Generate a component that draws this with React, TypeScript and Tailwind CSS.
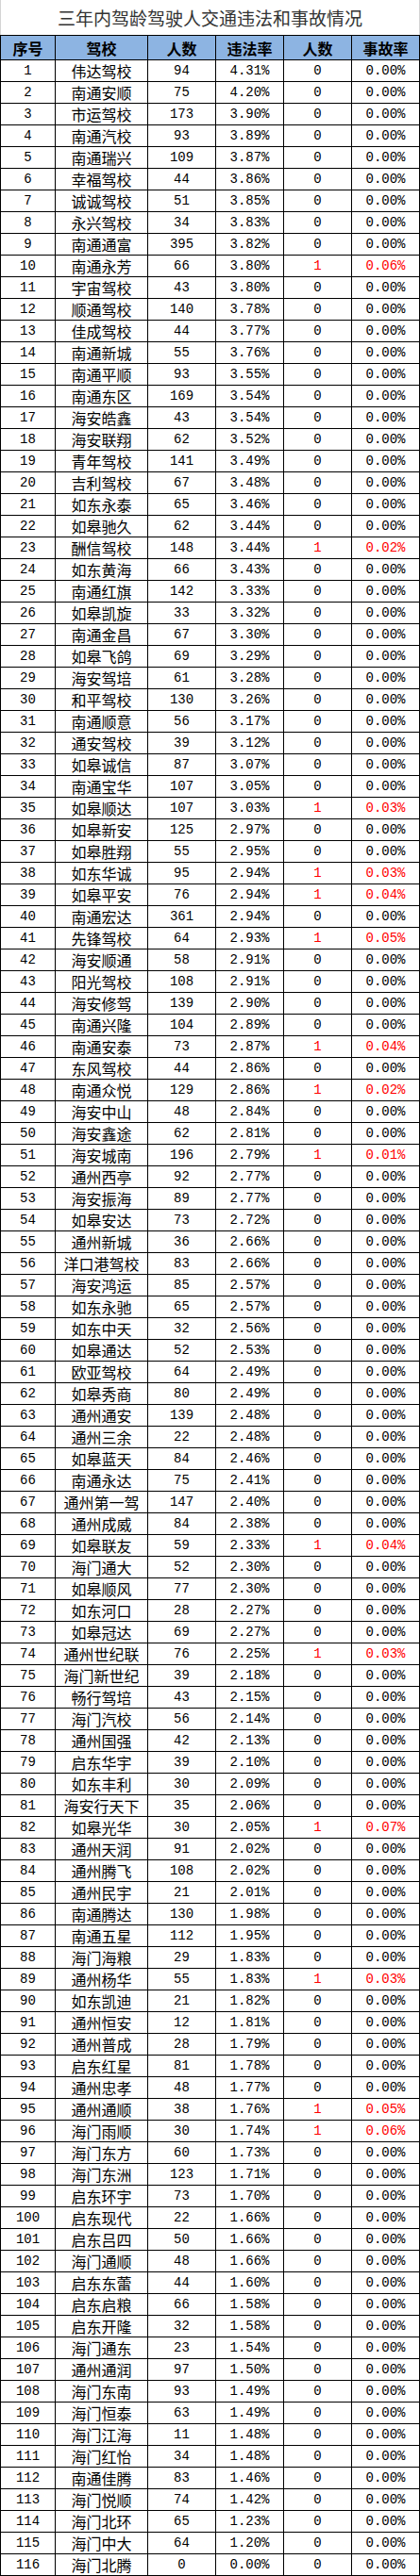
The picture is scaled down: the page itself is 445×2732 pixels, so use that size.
const raw = `伟达驾校,94,4.31%
南通安顺,75,4.20%
市运驾校,173,3.90%
南通汽校,93,3.89%
南通瑞兴,109,3.87%
幸福驾校,44,3.86%
诚诚驾校,51,3.85%
永兴驾校,34,3.83%
南通通富,395,3.82%
南通永芳,66,3.80%,1,0.06%
宇宙驾校,43,3.80%
顺通驾校,140,3.78%
佳成驾校,44,3.77%
南通新城,55,3.76%
南通平顺,93,3.55%
南通东区,169,3.54%
海安皓鑫,43,3.54%
海安联翔,62,3.52%
青年驾校,141,3.49%
吉利驾校,67,3.48%
如东永泰,65,3.46%
如皋驰久,62,3.44%
酬信驾校,148,3.44%,1,0.02%
如东黄海,66,3.43%
南通红旗,142,3.33%
如皋凯旋,33,3.32%
南通金昌,67,3.30%
如皋飞鸽,69,3.29%
海安驾培,61,3.28%
和平驾校,130,3.26%
南通顺意,56,3.17%
通安驾校,39,3.12%
如皋诚信,87,3.07%
南通宝华,107,3.05%
如皋顺达,107,3.03%,1,0.03%
如皋新安,125,2.97%
如皋胜翔,55,2.95%
如东华诚,95,2.94%,1,0.03%
如皋平安,76,2.94%,1,0.04%
南通宏达,361,2.94%
先锋驾校,64,2.93%,1,0.05%
海安顺通,58,2.91%
阳光驾校,108,2.91%
海安修驾,139,2.90%
南通兴隆,104,2.89%
南通安泰,73,2.87%,1,0.04%
东风驾校,44,2.86%
南通众悦,129,2.86%,1,0.02%
海安中山,48,2.84%
海安鑫途,62,2.81%
海安城南,196,2.79%,1,0.01%
通州西亭,92,2.77%
海安振海,89,2.77%
如皋安达,73,2.72%
通州新城,36,2.66%
洋口港驾校,83,2.66%
海安鸿运,85,2.57%
如东永驰,65,2.57%
如东中天,32,2.56%
如皋通达,52,2.53%
欧亚驾校,64,2.49%
如皋秀商,80,2.49%
通州通安,139,2.48%
通州三余,22,2.48%
如皋蓝天,84,2.46%
南通永达,75,2.41%
通州第一驾,147,2.40%
通州成威,84,2.38%
如皋联友,59,2.33%,1,0.04%
海门通大,52,2.30%
如皋顺风,77,2.30%
如东河口,28,2.27%
如皋冠达,69,2.27%
通州世纪联,76,2.25%,1,0.03%
海门新世纪,39,2.18%
畅行驾培,43,2.15%
海门汽校,56,2.14%
通州国强,42,2.13%
启东华宇,39,2.10%
如东丰利,30,2.09%
海安行天下,35,2.06%
如皋光华,30,2.05%,1,0.07%
通州天润,91,2.02%
通州腾飞,108,2.02%
通州民宇,21,2.01%
南通腾达,130,1.98%
南通五星,112,1.95%
海门海粮,29,1.83%
通州杨华,55,1.83%,1,0.03%
如东凯迪,21,1.82%
通州恒安,12,1.81%
通州普成,28,1.79%
启东红星,81,1.78%
通州忠孝,48,1.77%
通州通顺,38,1.76%,1,0.05%
海门雨顺,30,1.74%,1,0.06%
海门东方,60,1.73%
海门东洲,123,1.71%
启东环宇,73,1.70%
启东现代,22,1.66%
启东吕四,50,1.66%
海门通顺,48,1.66%
启东东蕾,44,1.60%
启东启粮,66,1.58%
启东开隆,32,1.58%
海门通东,23,1.54%
通州通润,97,1.50%
海门东南,93,1.49%
海门恒泰,63,1.49%
海门江海,11,1.48%
海门红怡,34,1.48%
南通佳腾,83,1.46%
海门悦顺,74,1.42%
海门北环,65,1.23%
海门中大,64,1.20%
海门北腾,0,0.00%`

type Row = { name: string; count: string; rate: string; acc: string; accRate: string }

const rows: Row[] = raw.split("\n").map(line => {
    const [name, count, rate, acc = "0", accRate = "0.00%"] = line.split(",")
    return { name, count, rate, acc, accRate }
})

const cols = "grid grid-cols-[58px_98px_72px_72px_72px_72px]"
const cell = "border-r border-black flex items-center justify-center overflow-hidden whitespace-nowrap"
const num = "font-['Liberation_Mono',monospace] text-[14px]"

export default function App() {
    return (
        <div className="w-[445px] bg-white text-black font-['Noto_Sans_CJK_SC','Noto_Sans',sans-serif]">
            <div className="h-[37px] border-x border-[#d4d4d4] flex items-center justify-center text-[19px] text-[#333] pt-[2px]">
                三年内驾龄驾驶人交通违法和事故情况
            </div>
            <div className={`${cols} h-[27px] border-y border-l border-black bg-[#8db4e2] font-bold text-[16px]`}>
                <div className={cell}>序号</div>
                <div className={cell}>驾校</div>
                <div className={cell}>人数</div>
                <div className={cell}>违法率</div>
                <div className={cell}>人数</div>
                <div className={cell}>事故率</div>
            </div>
            {rows.map((r, i) => {
                const hit = r.acc !== "0"
                return (
                    <div key={i} className={`${cols} h-[23px] border-b border-l border-black text-[16px]`}>
                        <div className={`${cell} ${num}`}>{i + 1}</div>
                        <div className={cell}>{r.name}</div>
                        <div className={`${cell} ${num}`}>{r.count}</div>
                        <div className={`${cell} ${num}`}>{r.rate}</div>
                        <div className={`${cell} ${num} ${hit ? "text-[#ff0000]" : ""}`}>{r.acc}</div>
                        <div className={`${cell} ${num} ${hit ? "text-[#ff0000]" : ""}`}>{r.accRate}</div>
                    </div>
                )
            })}
        </div>
    )
}
